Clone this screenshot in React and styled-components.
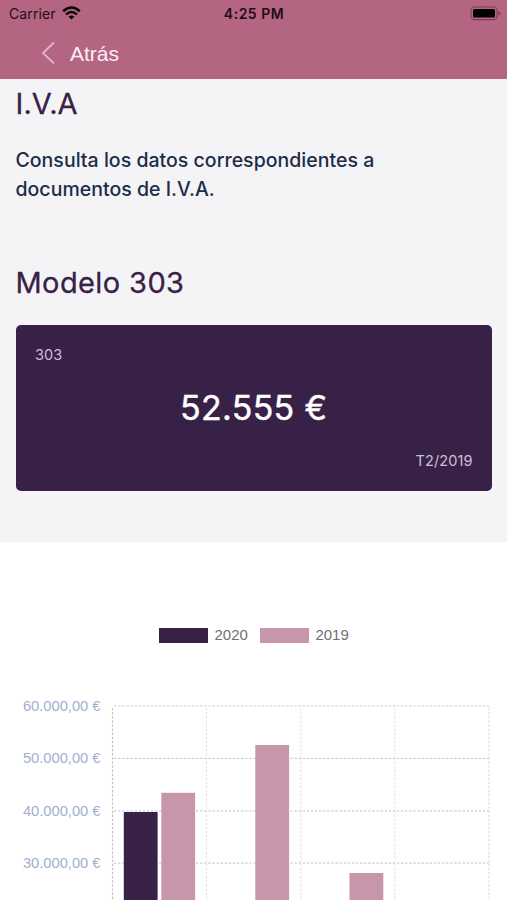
import React from "react";
import styled, { createGlobalStyle } from "styled-components";

const GlobalStyle = createGlobalStyle`
  * { box-sizing: border-box; }
  body { margin: 0; background: #fff; }
`;

const Screen = styled.div`
  width: 507px;
  height: 900px;
  overflow: hidden;
  display: flex;
  flex-direction: column;
  background: #ffffff;
  font-family: Inter, "Liberation Sans", sans-serif;
`;

const Header = styled.header`
  height: 79px;
  flex: none;
  background: #b36582;
`;

const StatusBar = styled.div`
  height: 27px;
  padding: 0 6px 0 9px;
  display: grid;
  grid-template-columns: 1fr auto 1fr;
  align-items: center;
  color: #1f0d18;
  font-size: 14px;
  line-height: 26px;
`;

const Carrier = styled.div`
  display: flex;
  align-items: center;
  gap: 6px;
  letter-spacing: 0.1px;
`;

const Clock = styled.div`
  font-weight: 600;
  font-size: 14px;
  letter-spacing: 0.5px;
  margin-right: 2px;
`;

const BatteryIcon = styled.svg`
  justify-self: end;
  display: block;
`;

const BackButton = styled.button`
  display: flex;
  align-items: center;
  gap: 15px;
  height: 52px;
  margin: 0;
  padding: 2px 0 0 41px;
  border: 0;
  background: none;
  color: #fbeef4;
  font-family: "Liberation Sans", Arial, sans-serif;
  font-size: 21px;
`;

const Chevron = styled.svg`
  display: block;
  margin-top: -3px;
`;

const Summary = styled.main`
  flex: none;
  height: 463px;
  padding: 6px 15px 0 15.5px;
  background: #f4f4f7;
  color: #382147;
`;

const Heading = styled.h1`
  margin: 0;
  height: 36px;
  padding-top: 1px;
  font-size: 29px;
  line-height: 36px;
  font-weight: 400;
  -webkit-text-stroke: 0.3px currentColor;
  letter-spacing: ${(p) => p.$spacing || "0"};
`;

const Description = styled.p`
  margin: 25px 0 59.5px;
  width: 400px;
  color: #1d2c48;
  font-size: 19.5px;
  line-height: 29.3px;
  font-weight: 500;
  letter-spacing: 0.02px;
`;

const Card = styled.section`
  margin-top: 24.5px;
  height: 166px;
  padding: 20px 19.5px;
  border-radius: 5px;
  background: #382147;
  display: flex;
  flex-direction: column;
  justify-content: space-between;
`;

const CardNote = styled.div`
  align-self: ${(p) => (p.$end ? "flex-end" : "flex-start")};
  color: #cdbfd2;
  font-size: 14.5px;
  line-height: 20px;
  letter-spacing: 0.1px;
`;

const Amount = styled.div`
  align-self: center;
  color: #ffffff;
  font-size: 34px;
  line-height: 42px;
  font-weight: 400;
  -webkit-text-stroke: 0.4px currentColor;
  letter-spacing: 0.3px;
`;

const ChartPanel = styled.section`
  flex: 1;
  min-height: 0;
  padding-top: 84px;
  font-family: "Liberation Sans", Arial, sans-serif;
  overflow: hidden;
`;

const Legend = styled.div`
  display: flex;
  gap: 12px;
  height: 18px;
  padding-left: 159px;
`;

const LegendItem = styled.div`
  display: flex;
  align-items: center;
  gap: 6.5px;
  color: #707070;
  font-size: 15px;
  line-height: 18px;
`;

const Swatch = styled.span`
  width: 49px;
  height: 15px;
  background: ${(p) => p.$color};
`;

const Plot = styled.svg`
  display: block;
  margin-top: 46px;

  text {
    fill: #9fafd0;
    font-size: 14.7px;
    text-anchor: end;
  }
`;

const dark = "#382147";
const pink = "#c896ab";

const rows = [
  { y: 16, label: "60.000,00 €" },
  { y: 68.3, label: "50.000,00 €" },
  { y: 120.8, label: "40.000,00 €" },
  { y: 173.2, label: "30.000,00 €" },
];

const columns = [
  { x: 112.5, color: "#c2c2c6" },
  { x: 206.5, color: "#e4e4e6" },
  { x: 300.7, color: "#e4e4e6" },
  { x: 394.7, color: "#e4e4e6" },
  { x: 489, color: "#dedee0" },
];

const bars = [
  { x: 123.8, y: 122, color: dark },
  { x: 161.3, y: 102.8, color: pink },
  { x: 255.3, y: 55, color: pink },
  { x: 349.5, y: 183, color: pink },
];

export default function App() {
  return (
    <Screen>
      <GlobalStyle />
      <Header>
        <StatusBar>
          <Carrier>
            Carrier
            <svg width="19" height="15" viewBox="0 0 19 15" fill="none" stroke="#0a0508">
              <path d="M1.2 5.2 Q9.5 -2.2 17.8 5.2" strokeWidth="2.5" />
              <path d="M4 8.3 Q9.5 3.5 15 8.3" strokeWidth="2.4" />
              <path d="M9.5 13.6 L6.5 10.6 Q9.5 8.2 12.5 10.6 Z" fill="#0a0508" stroke="none" />
            </svg>
          </Carrier>
          <Clock>4:25 PM</Clock>
          <BatteryIcon width="31" height="15" viewBox="0 0 31 15">
            <rect x="1" y="1" width="26" height="12.6" rx="3.5" fill="none" stroke="#7e405b" strokeWidth="1.1" />
            <rect x="3" y="3" width="22" height="8.6" rx="1.5" fill="#000" />
            <path d="M28.3 5 Q30.4 5.8 30.4 7.3 Q30.4 8.8 28.3 9.6 Z" fill="#7e405b" />
          </BatteryIcon>
        </StatusBar>
        <BackButton>
          <Chevron width="14" height="24" viewBox="0 0 14 24" fill="none" stroke="#e3b3c8" strokeWidth="1.8">
            <path d="M13 1.5 L2 12 L13 22.5" />
          </Chevron>
          Atrás
        </BackButton>
      </Header>
      <Summary>
        <Heading $spacing="0.1px">I.V.A</Heading>
        <Description>
          Consulta los datos correspondientes a documentos de I.V.A.
        </Description>
        <Heading as="h2" $spacing="0.4px">Modelo 303</Heading>
        <Card>
          <CardNote>303</CardNote>
          <Amount>52.555 €</Amount>
          <CardNote $end>T2/2019</CardNote>
        </Card>
      </Summary>
      <ChartPanel>
        <Legend>
          <LegendItem>
            <Swatch $color={dark} />
            2020
          </LegendItem>
          <LegendItem>
            <Swatch $color={pink} />
            2019
          </LegendItem>
        </Legend>
        <Plot width="507" height="210" viewBox="0 0 507 210">
          {columns.map((c) => (
            <line key={c.x} x1={c.x} x2={c.x} y1="18" y2="210" stroke={c.color} strokeWidth="1.2" strokeDasharray="2.4 1.7" />
          ))}
          {rows.map((r) => (
            <g key={r.label}>
              <line x1="114" x2="489" y1={r.y} y2={r.y} stroke="#cfcfd2" strokeWidth="1.2" strokeDasharray="2.4 1.7" />
              <text x="100.5" y={r.y + 5.1}>{r.label}</text>
            </g>
          ))}
          {bars.map((b) => (
            <rect key={b.x} x={b.x} y={b.y} width="33.8" height={210 - b.y} fill={b.color} />
          ))}
        </Plot>
      </ChartPanel>
    </Screen>
  );
}
